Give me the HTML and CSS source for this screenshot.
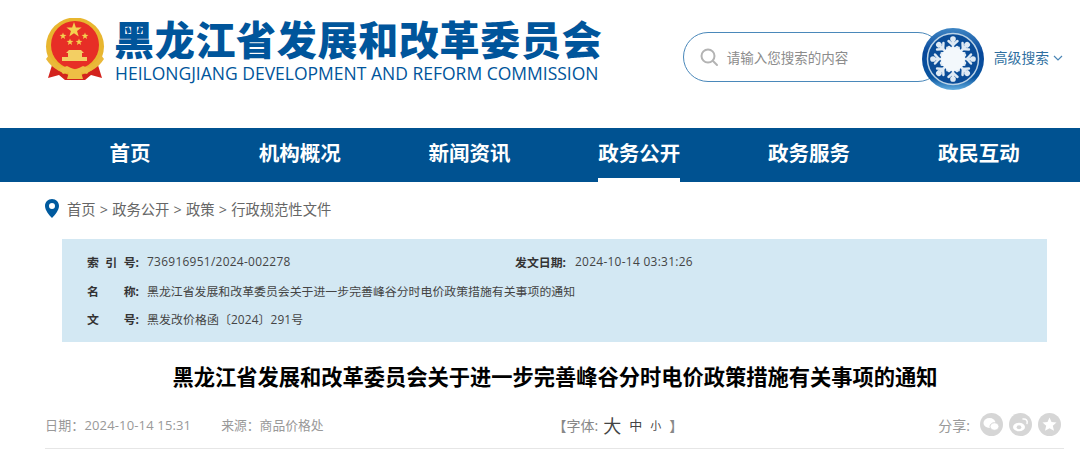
FILE: index.html
```html
<!DOCTYPE html>
<html lang="zh-CN">
<head>
  <meta charset="UTF-8" />
  <meta name="viewport" content="width=device-width, initial-scale=1.0"/>
  <title>黑龙江省发展和改革委员会</title>
  <link rel="stylesheet" href="styles.css">
</head>
<body>

  <div class="header">
    <div class="brand">
      <svg class="emblem" width="60" height="62" viewBox="0 0 60 62">
        <defs>
          <polygon id="star" points="0,-10 2.350,-3.200 9.500,-3.100 3.800,1.200 5.900,8.100 0,4 -5.900,8.100 -3.800,1.200 -9.500,-3.100 -2.350,-3.200" fill="#f4d14f"/>
        </defs>
        <path d="M8 44 L3 60 L14 57 L20 62 H40 L46 57 L57 60 L52 44 Z" fill="#d3231d"/>
        <circle cx="30" cy="28.500" r="29" fill="#e8b62f"/>
        <circle cx="30" cy="27" r="24" fill="#e72e26"/>
        <use href="#star" transform="translate(29 12) scale(0.8)"/>
        <use href="#star" transform="translate(18 18) scale(0.36)"/>
        <use href="#star" transform="translate(40 18) scale(0.36)"/>
        <use href="#star" transform="translate(25 24) scale(0.36)"/>
        <use href="#star" transform="translate(34 24) scale(0.36)"/>
        <path d="M21 35 L24 32 H36 L39 35 H37 V39 H42 V43 H17 V39 H23 V35 Z" fill="#f3cf63"/>
        <path d="M4 37 C10 47 19 51 30 51 C41 51 50 47 56 37 L59 41 C52 52 42 56 30 56 C18 56 8 52 1 41 Z" fill="#eab93a"/>
        <path d="M14 51 L22 48 L30 52 L38 48 L46 51 L42 56 L36 54 L38 61 H22 L24 54 L18 56 Z" fill="#eebf45"/>
      </svg>
      <div class="brand-text">
        <div class="brand-cn">黑龙江省发展和改革委员会</div>
        <div class="brand-en">HEILONGJIANG DEVELOPMENT AND REFORM COMMISSION</div>
      </div>
    </div>

    <div class="search">
      <div class="search-box">
        <svg width="20" height="20" viewBox="0 0 20 20" fill="none" stroke="#b3b3b3" stroke-width="2">
          <circle cx="9" cy="9" r="6.500"/>
          <path d="M14 14 L18 18" stroke-linecap="round"/>
        </svg>
        <span class="search-hint">请输入您搜索的内容</span>
      </div>
      <svg class="search-btn" width="62" height="62" viewBox="0 0 62 62">
        <defs>
          <linearGradient id="ring" x1="0" y1="0" x2="0" y2="1">
            <stop offset="0" stop-color="#3f86c4"/>
            <stop offset="0.4" stop-color="#07479a"/>
            <stop offset="0.8" stop-color="#0a55a0"/>
            <stop offset="1" stop-color="#63aee0"/>
          </linearGradient>
          <g id="arm" stroke="#dfeaf4" stroke-width="2.500" stroke-linecap="round" fill="none">
            <path d="M31 31 V10"/>
            <path d="M26.500 13 L31 17 L35.500 13"/>
            <path d="M27 19 L31 23 L35 19"/>
            <circle cx="31" cy="11" r="1.600" fill="#dfeaf4"/>
          </g>
        </defs>
        <circle cx="31" cy="31" r="31" fill="url(#ring)"/>
        <circle cx="31" cy="31" r="25.500" fill="#0a4c97" stroke="#bcd3e6" stroke-width="1.500"/>
        <use href="#arm"/>
        <use href="#arm" transform="rotate(45 31 31)"/>
        <use href="#arm" transform="rotate(90 31 31)"/>
        <use href="#arm" transform="rotate(135 31 31)"/>
        <use href="#arm" transform="rotate(180 31 31)"/>
        <use href="#arm" transform="rotate(225 31 31)"/>
        <use href="#arm" transform="rotate(270 31 31)"/>
        <use href="#arm" transform="rotate(315 31 31)"/>
        <circle cx="31" cy="31" r="12" fill="#f3f8fc"/>
      </svg>
      <span class="search-more">高级搜索</span>
      <svg class="chevron" width="10" height="6" viewBox="0 0 10 6" fill="none" stroke="#4a85b5" stroke-width="1.200">
        <path d="M1 1 L5 5 L9 1"/>
      </svg>
    </div>
  </div>

  <div class="nav">
    <a class="nav-item"><span>首页</span></a>
    <a class="nav-item"><span>机构概况</span></a>
    <a class="nav-item"><span>新闻资讯</span></a>
    <a class="nav-item active"><span>政务公开</span></a>
    <a class="nav-item"><span>政务服务</span></a>
    <a class="nav-item"><span>政民互动</span></a>
  </div>

  <div class="crumbs">
    <svg class="pin" width="14" height="19" viewBox="0 0 14 19">
      <path fill-rule="evenodd" d="M7 0 C3 0 0 3 0 7 C0 11 4 16 7 19 C10 16 14 11 14 7 C14 3 11 0 7 0 Z M7 4 A3 3 0 1 1 7 10 A3 3 0 1 1 7 4 Z" fill="#005a9e"/>
    </svg>
    <span>首页 &gt; 政务公开 &gt; 政策 &gt; 行政规范性文件</span>
  </div>

  <div class="info">
    <div class="info-row">
      <div class="info-cell wide">
        <b class="info-key"><i>索</i><i>引</i><i>号:</i></b><span class="num">736916951/2024-002278</span>
      </div>
      <div class="info-cell">
        <b class="info-key">发文日期:</b><span class="num">2024-10-14 03:31:26</span>
      </div>
    </div>
    <div class="info-row">
      <div class="info-cell">
        <b class="info-key"><i>名</i><i>称:</i></b><span>黑龙江省发展和改革委员会关于进一步完善峰谷分时电价政策措施有关事项的通知</span>
      </div>
    </div>
    <div class="info-row">
      <div class="info-cell">
        <b class="info-key"><i>文</i><i>号:</i></b><span class="num-sm">黑发改价格函〔2024〕291号</span>
      </div>
    </div>
  </div>

  <h1 class="title">黑龙江省发展和改革委员会关于进一步完善峰谷分时电价政策措施有关事项的通知</h1>

  <div class="meta">
    <div class="meta-left">
      <span class="meta-date">日期：2024-10-14 15:31</span>
      <span class="meta-source">来源：商品价格处</span>
    </div>
    <div class="font-size">
      <span class="size-label">【字体:</span>
      <span class="size-l">大</span>
      <span class="size-m">中</span>
      <span class="size-s">小</span>
      <span class="size-label">】</span>
    </div>
    <div class="share">
      <span class="share-label">分享:</span>
      <svg width="23" height="23" viewBox="0 0 23 23">
        <circle cx="11.500" cy="11.500" r="11.500" fill="#d6d6d6"/>
        <ellipse cx="9.500" cy="10" rx="6" ry="5" fill="#fff"/>
        <ellipse cx="14.500" cy="13.500" rx="4.500" ry="3.800" fill="#fff" stroke="#d6d6d6"/>
      </svg>
      <svg width="23" height="23" viewBox="0 0 23 23">
        <circle cx="11.500" cy="11.500" r="11.500" fill="#d6d6d6"/>
        <ellipse cx="10" cy="14" rx="6" ry="4.300" fill="#fff"/>
        <ellipse cx="10" cy="14.300" rx="2.300" ry="2" fill="#d6d6d6"/>
        <path d="M14 6 C17 5.500 19 7.500 18 10.500" fill="none" stroke="#fff" stroke-width="1.500" stroke-linecap="round"/>
      </svg>
      <svg width="23" height="23" viewBox="0 0 23 23">
        <circle cx="11.500" cy="11.500" r="11.500" fill="#d6d6d6"/>
        <polygon points="11.500,4.500 13.500,9 18.500,9.500 14.800,12.800 16,17.800 11.500,15.200 7,17.800 8.200,12.800 4.500,9.500 9.500,9" fill="#fff"/>
      </svg>
    </div>
  </div>

</body>
</html>
```

FILE: styles.css
```css
body {
  margin: 0;
  font-family: "Open Sans", "Noto Sans CJK SC", sans-serif;
  color: #333;
  background: #fff;
  overflow: hidden;
}

.header {
  height: 128px;
  display: flex;
  justify-content: space-between;
  box-sizing: border-box;
  padding: 17px 0 0 45px;
}

.brand {
  display: flex;
  gap: 9px;
  height: 66px;
}

.emblem {
  margin-top: 1px;
}

.brand-text {
  color: #00559b;
}

.brand-cn {
  font-size: 40px;
  font-weight: 900;
  line-height: 45px;
  letter-spacing: 0.7px;
}

.brand-en {
  font-size: 17.500px;
  line-height: 20px;
  margin: 1px 0 0 1px;
  white-space: nowrap;
}

.search {
  display: flex;
  align-items: center;
  height: 62px;
  margin-top: 11px;
  padding-right: 17px;
}

.search-box {
  width: 260px;
  height: 50px;
  box-sizing: border-box;
  border: 1px solid #4a88ba;
  border-radius: 25px;
  padding-left: 15px;
  display: flex;
  align-items: center;
  gap: 8px;
  margin: 0 -21px 4px 0;
}

.search-hint {
  font-size: 13.500px;
  color: #8c8c8c;
}

.search-btn {
  position: relative;
  z-index: 1;
}

.search-more {
  font-size: 13.800px;
  color: #2f6f9f;
  margin: 0 0 4px 10px;
}

.chevron {
  margin: 0 0 2px 4px;
}

.nav {
  height: 54px;
  background: #005291;
  display: flex;
  padding-left: 45px;
}

.nav-item {
  width: 169.800px;
  display: flex;
  justify-content: center;
  color: #fff;
  font-size: 20.500px;
  font-weight: 700;
  line-height: 50px;
}

.nav-item span {
  height: 50px;
}

.active span {
  border-bottom: 4px solid #fff;
}

.crumbs {
  height: 57px;
  box-sizing: border-box;
  padding: 0 0 5px 45px;
  display: flex;
  align-items: center;
  gap: 8px;
  font-size: 14.300px;
  word-spacing: 0.500px;
  color: #666;
}

.pin {
  margin-top: 1px;
}

.info {
  margin: 0 33px 0 62px;
  height: 103px;
  box-sizing: border-box;
  padding: 8px 0 0 25px;
  background: #d3e8f3;
  font-size: 11.900px;
  color: #444;
}

.info-row {
  display: flex;
  height: 28.800px;
  align-items: center;
}

.info-cell {
  display: flex;
}

.wide {
  width: 428px;
}

.info-key {
  width: 52px;
  margin-right: 8px;
  color: #333;
  flex: none;
  display: flex;
  justify-content: space-between;
}

.info-key i {
  font-style: normal;
}

.num {
  letter-spacing: 0.300px;
}

.num-sm {
  letter-spacing: 0.100px;
}

.title {
  margin: 0;
  height: 70px;
  padding-left: 30px;
  font-size: 21.250px;
  line-height: 70px;
  text-align: center;
  color: #000;
  font-weight: 700;
}

.meta {
  margin: 0 16px 0 45px;
  height: 37px;
  box-sizing: border-box;
  padding-bottom: 11px;
  border-bottom: 1px solid #e6e6e6;
  display: flex;
  align-items: center;
  font-size: 13px;
  color: #999;
}

.meta-left {
  display: flex;
  gap: 30px;
}

.meta-date {
  letter-spacing: 0.150px;
}

.meta-source {
  font-size: 12.800px;
}

.font-size {
  display: flex;
  align-items: center;
  gap: 8px;
  margin-left: 229px;
}

.size-label {
  font-size: 14px;
  color: #888;
}

.size-l {
  font-size: 18px;
  color: #444;
  margin-left: -3px;
}

.size-m {
  font-size: 13px;
  color: #444;
}

.size-s {
  font-size: 11px;
  color: #444;
}

.share {
  display: flex;
  align-items: center;
  gap: 6px;
  margin-left: auto;
  padding-right: 3px;
}

.share-label {
  margin-right: 4px;
  font-size: 14px;
}
```
